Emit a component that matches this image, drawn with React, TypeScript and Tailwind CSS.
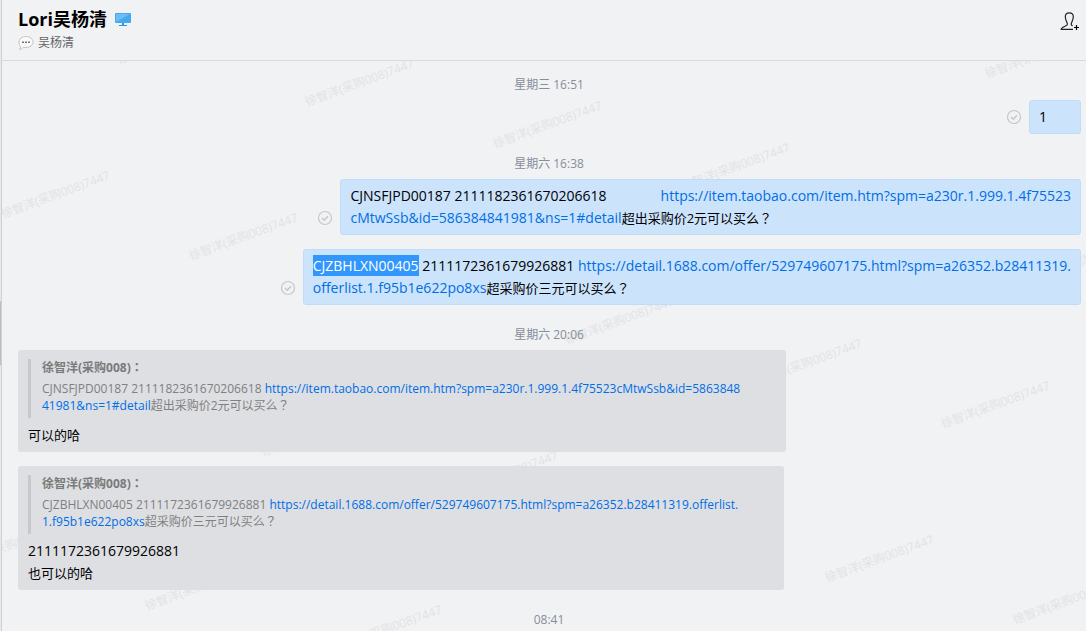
import type { ReactNode } from "react";

const MARK = "徐智洋(采购008)7447";

const marks: [number, number][] = [
  [115, 61], [303, 103], [491, 145], [679, 187], [1055, 271],
  [983, 75], [-1, 215], [187, 257], [563, 341], [751, 383], [939, 425],
  [259, 453], [447, 495], [823, 579], [1011, 621],
  [-45, 565], [143, 607], [331, 649],
];

function Watermark() {
  return (
    <div aria-hidden="true" className="pointer-events-none absolute inset-0 overflow-hidden text-xs leading-4 text-[#e2e3e5]">
      {marks.map(([x, y]) => (
        <span
          key={`${x},${y}`}
          className="absolute origin-bottom-left -rotate-20 whitespace-nowrap"
          style={{ left: x + 3, top: y - 70 }}
        >
          {MARK}
        </span>
      ))}
    </div>
  );
}

function Time({ children }: { children: ReactNode }) {
  return <time className="block pl-2.5 text-center text-xs leading-4 text-[#868e99]">{children}</time>;
}

function Url({ href, children }: { href: string; children: ReactNode }) {
  return <a href={href} className="text-[#006ee6]">{children}</a>;
}

function Zh({ children }: { children: ReactNode }) {
  return <span className="text-[13px]">{children}</span>;
}

// Full-width punctuation, centred in its cell.
function Punct({ children }: { children: ReactNode }) {
  return <span lang="zh-TW" className="font-['Noto_Sans_CJK_TC',sans-serif] leading-none">{children}</span>;
}

function ReadIcon() {
  return (
    <svg role="img" aria-label="已读" className="size-4 shrink-0" viewBox="0 0 16 16" fill="none" stroke="#c5c8cb" strokeWidth="1.2">
      <circle cx="8" cy="8" r="6.5" />
      <path d="M5 8l2.3 2.2L11 6.2" strokeWidth="1.5" />
    </svg>
  );
}

function Sent({ children }: { children: ReactNode }) {
  return (
    <div className="flex items-end justify-end gap-[7px] pr-[5px] pl-4">
      <div className="pb-[9px]"><ReadIcon /></div>
      <div className="min-w-[52px] rounded-[3px] border border-[#c1dcfb] bg-[#cce3fc] px-[9px] py-[5px] text-sm leading-[22px]">
        {children}
      </div>
    </div>
  );
}

function Received({ quote, children }: { quote: ReactNode; children: ReactNode }) {
  return (
    <article className="ml-4 w-fit max-w-full rounded-[3px] bg-[#dedfe3] pt-[9px] pr-[46px] pb-1.5 pl-2.5">
      <blockquote className="border-l-3 border-[#c3c9cc] pb-1 pl-[11px] text-xs leading-[17px] text-[#808080]">
        <p className="pb-1 font-bold text-[#7a7a7a]">徐智洋(采购008)<Punct>：</Punct></p>
        <p>{quote}</p>
      </blockquote>
      <div className="pt-1.5 text-sm leading-[22px]">{children}</div>
    </article>
  );
}

export default function App() {
  return (
    <div className="flex min-h-screen bg-[#f1f2f4] font-['Open_Sans','Noto_Sans_CJK_SC',sans-serif] text-black">
      <div className="flex w-0.5 shrink-0 flex-col border-r border-[#cfd1d4] bg-[#e6e7ea] pt-[301px]">
        <div className="h-16 bg-[#bcbec1]" />
      </div>
      <div className="flex min-w-0 flex-1 flex-col">
        <header className="flex h-[61px] items-start justify-between border-b border-[#dadbde] pt-2 pr-[7px] pl-4">
          <div>
            <h1 className="flex items-center gap-2 text-lg leading-[22px] font-bold">
              Lori吴杨清
              <svg role="img" aria-label="电脑在线" className="h-[13px] w-4" viewBox="0 0 16 13">
                <path d="M1 0h14a1 1 0 0 1 1 1v8a1 1 0 0 1-1 1H1a1 1 0 0 1-1-1V1a1 1 0 0 1 1-1z" fill="#46a8ee" />
                <path d="M1 1h14L1 9z" fill="#6cbcf5" />
                <path d="M7 10h2v2h3v1H4v-1h3z" fill="#2f96df" />
              </svg>
            </h1>
            <p className="flex items-center gap-1 pt-1 text-xs leading-[17px] text-[#666]">
              <svg aria-hidden="true" className="size-4" viewBox="0 0 16 16">
                <path d="M8 1.5c4 0 7 2.3 7 5.5s-3 5.500-7 5.500c-.9 0-1.800-.1-2.600-.3C4.500 13.500 3.200 14.200 1.500 14.500c.8-.9 1.100-1.900 1.100-3C1.500 10.500 1 8.800 1 7c0-3.200 3-5.500 7-5.500z" fill="#fafafa" stroke="#c4c4c4" />
                <path d="M4 6.500h2v1.500H4zM7 6.500h2v1.500H7zM10 6.500h2v1.500h-2z" fill="#777" />
              </svg>
              吴杨清
            </p>
          </div>
          <button type="button" aria-label="添加成员" className="mt-1">
            <svg className="h-5 w-[19px]" viewBox="0 0 19 20" fill="none" stroke="#222" strokeWidth="1.200">
              <path d="M13 17.400H1.200c0-2.600 5.800-2.900 6.200-5C7.600 11 5.300 8.500 5.300 4.800 5.300 2 6.800.8 9.300.8s4 1.200 4 4c0 3.700-2.300 6.200-2.100 7.600.1.800.8 1.200 1.300 1.500" />
              <path d="M14 15.500h5M16.500 13v5" stroke="#000" />
            </svg>
          </button>
        </header>
        <main className="relative flex-1 overflow-hidden">
          <Watermark />
          <div className="relative pt-4">
            <Time>星期三 16:51</Time>
            <div className="pt-[7px]"><Sent>1</Sent></div>
            <div className="pt-[22px] pb-[7px]"><Time>星期六 16:38</Time></div>
            <div className="flex flex-col gap-3.5">
              <Sent>
                CJNSFJPD00187 2111182361670206618<span className="inline-block w-[54px]" />
                <Url href="https://item.taobao.com/item.htm?spm=a230r.1.999.1.4f75523cMtwSsb&id=586384841981&ns=1#detail">
                  https://item.taobao.com/item.htm?spm=a230r.1.999.1.4f75523<br />cMtwSsb&amp;id=586384841981&amp;ns=1#detail
                </Url>
                <Zh>超出采购价2元可以买么<Punct>？</Punct></Zh>
              </Sent>
              <Sent>
                <mark className="bg-[#3297fd] py-px text-white">CJZBHLXN00405</mark> 2111172361679926881{" "}
                <Url href="https://detail.1688.com/offer/529749607175.html?spm=a26352.b28411319.offerlist.1.f95b1e622po8xs">
                  https://detail.1688.com/offer/529749607175.html?spm=a26352.b28411319.<br />offerlist.1.f95b1e622po8xs
                </Url>
                <Zh>超采购价三元可以买么<Punct>？</Punct></Zh>
              </Sent>
            </div>
            <div className="pt-[22px] pb-[7px]"><Time>星期六 20:06</Time></div>
            <div className="flex flex-col gap-3.5">
              <Received
                quote={
                  <>
                    CJNSFJPD00187 2111182361670206618{" "}
                    <Url href="https://item.taobao.com/item.htm?spm=a230r.1.999.1.4f75523cMtwSsb&id=586384841981&ns=1#detail">
                      https://item.taobao.com/item.htm?spm=a230r.1.999.1.4f75523cMtwSsb&amp;id=5863848<br />41981&amp;ns=1#detail
                    </Url>
                    超出采购价2元可以买么<Punct>？</Punct>
                  </>
                }
              >
                <Zh>可以的哈</Zh>
              </Received>
              <Received
                quote={
                  <>
                    CJZBHLXN00405 2111172361679926881{" "}
                    <Url href="https://detail.1688.com/offer/529749607175.html?spm=a26352.b28411319.offerlist.1.f95b1e622po8xs">
                      https://detail.1688.com/offer/529749607175.html?spm=a26352.b28411319.offerlist.<br />1.f95b1e622po8xs
                    </Url>
                    超采购价三元可以买么<Punct>？</Punct>
                  </>
                }
              >
                2111172361679926881<br />
                <Zh>也可以的哈</Zh>
              </Received>
            </div>
            <div className="pt-[22px]"><Time>08:41</Time></div>
          </div>
        </main>
      </div>
    </div>
  );
}
